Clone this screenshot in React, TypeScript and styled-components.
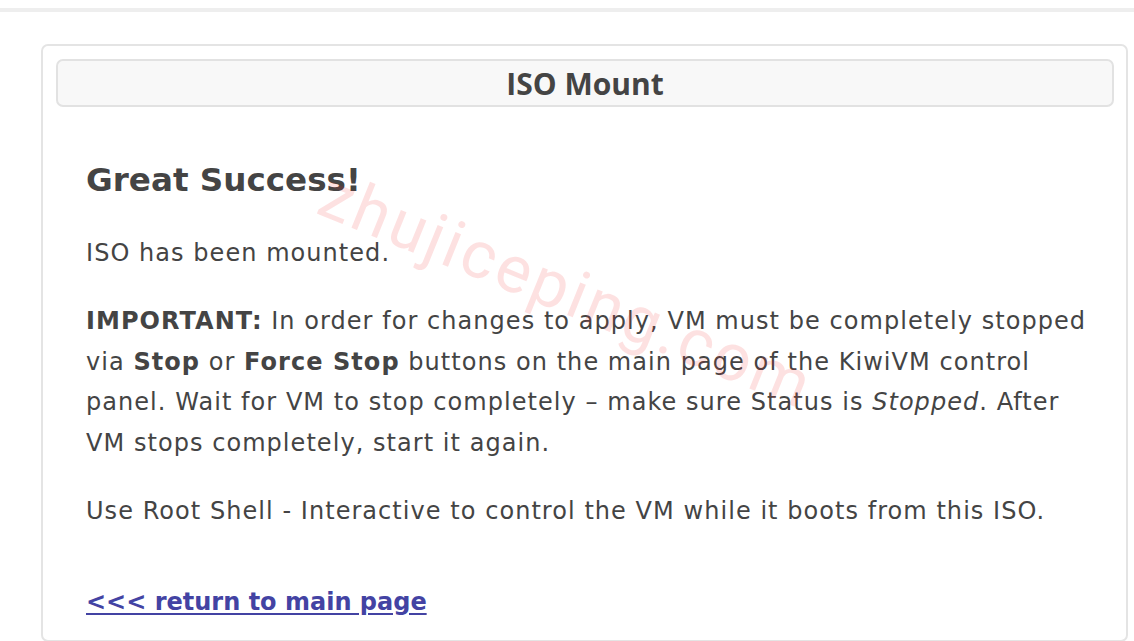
import React from 'react';
import styled, { createGlobalStyle } from 'styled-components';

const GlobalStyle = createGlobalStyle`
  html, body {
    margin: 0;
    padding: 0;
    background: #fff;
  }
  body {
    font-family: "DejaVu Sans", Verdana, sans-serif;
    color: #444;
    overflow: hidden;
  }
`;

const Page = styled.div`
  width: 1134px;
  padding-top: 8px;
`;

const TopRule = styled.div`
  height: 4px;
  background: #eeeeee;
`;

const Card = styled.div`
  position: relative;
  margin: 32px 6px 0 41px;
  border: 2px solid #e4e4e4;
  border-radius: 7px;
  padding: 13px 12px 0 13px;
`;

const Header = styled.div`
  height: 44px;
  border: 2px solid #e2e2e2;
  border-radius: 7px;
  background: #f8f8f8;
  display: flex;
  align-items: center;
  justify-content: center;
`;

const Title = styled.h2`
  margin: 0;
  font-family: "Open Sans", "Liberation Sans", sans-serif;
  font-weight: 700;
  font-size: 30px;
  color: #444;
`;

const Body = styled.div`
  padding: 54px 24px 17px 30px;
`;

const Heading = styled.h3`
  margin: 0 0 34px 0;
  font-size: 32.6px;
  line-height: 38px;
  font-weight: 700;
  color: #444;
`;

const Para = styled.p`
  margin: 0 0 27px 0;
  font-size: 24px;
  line-height: 40.8px;
  letter-spacing: 1.05px;
  color: #444;
`;

const Back = styled.a`
  display: inline-block;
  margin-top: 23px;
  font-size: 24px;
  line-height: 40.8px;
  font-weight: 700;
  color: #4343a3;
  text-decoration: underline;
  text-underline-offset: 3px;
`;

const Watermark = styled.div`
  position: absolute;
  left: 294px;
  top: 110px;
  transform: rotate(22deg);
  transform-origin: left top;
  font-family: Roboto, "DejaVu Sans", sans-serif;
  font-weight: 400;
  font-size: 66px;
  line-height: normal;
  letter-spacing: 3px;
  color: rgba(240, 40, 40, 0.14);
  pointer-events: none;
  white-space: nowrap;
`;

export default function App() {
  return (
    <Page>
      <GlobalStyle />
      <TopRule />
      <Card>
        <Header>
          <Title>ISO Mount</Title>
        </Header>
        <Body>
          <Heading>Great Success!</Heading>
          <Para>ISO has been mounted.</Para>
          <Para>
            <b>IMPORTANT:</b> In order for changes to apply, VM must be completely stopped via{' '}
            <b>Stop</b> or <b>Force Stop</b> buttons on the main page of the KiwiVM control panel.
            Wait for VM to stop completely – make sure Status is <i>Stopped</i>. After VM stops
            completely, start it again.
          </Para>
          <Para>Use Root Shell - Interactive to control the VM while it boots from this ISO.</Para>
          <Back href="#">&lt;&lt;&lt; return to main page</Back>
        </Body>
        <Watermark>zhujiceping.com</Watermark>
      </Card>
    </Page>
  );
}
